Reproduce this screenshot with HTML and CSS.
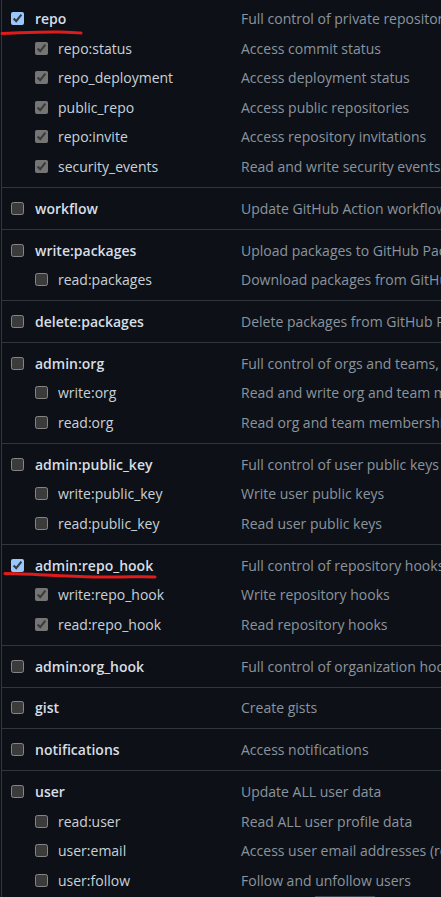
FILE: index.html
```html
<!DOCTYPE html>
<html lang="en">
<head>
<meta charset="utf-8">
<title>Scopes</title>
<link rel="stylesheet" href="styles.css">
</head>
<body>
<div class="scopes">
  <div class="group">
    <div class="row parent"><label class="name"><input type="checkbox" checked><span>repo</span></label><span class="desc">Full control of private repositories</span></div>
    <div class="row child"><label class="name"><input type="checkbox" checked disabled><span>repo:status</span></label><span class="desc">Access commit status</span></div>
    <div class="row child"><label class="name"><input type="checkbox" checked disabled><span>repo_deployment</span></label><span class="desc">Access deployment status</span></div>
    <div class="row child"><label class="name"><input type="checkbox" checked disabled><span>public_repo</span></label><span class="desc">Access public repositories</span></div>
    <div class="row child"><label class="name"><input type="checkbox" checked disabled><span>repo:invite</span></label><span class="desc">Access repository invitations</span></div>
    <div class="row child"><label class="name"><input type="checkbox" checked disabled><span>security_events</span></label><span class="desc">Read and write security events</span></div>
  </div>
  <div class="group">
    <div class="row parent"><label class="name"><input type="checkbox"><span>workflow</span></label><span class="desc">Update GitHub Action workflows</span></div>
  </div>
  <div class="group">
    <div class="row parent"><label class="name"><input type="checkbox"><span>write:packages</span></label><span class="desc">Upload packages to GitHub Package Registry</span></div>
    <div class="row child"><label class="name"><input type="checkbox"><span>read:packages</span></label><span class="desc">Download packages from GitHub Package Registry</span></div>
  </div>
  <div class="group">
    <div class="row parent"><label class="name"><input type="checkbox"><span>delete:packages</span></label><span class="desc">Delete packages from GitHub Package Registry</span></div>
  </div>
  <div class="group">
    <div class="row parent"><label class="name"><input type="checkbox"><span>admin:org</span></label><span class="desc">Full control of orgs and teams, read and write org projects</span></div>
    <div class="row child"><label class="name"><input type="checkbox"><span>write:org</span></label><span class="desc">Read and write org and team membership, read and write org projects</span></div>
    <div class="row child"><label class="name"><input type="checkbox"><span>read:org</span></label><span class="desc">Read org and team membership, read org projects</span></div>
  </div>
  <div class="group">
    <div class="row parent"><label class="name"><input type="checkbox"><span>admin:public_key</span></label><span class="desc">Full control of user public keys</span></div>
    <div class="row child"><label class="name"><input type="checkbox"><span>write:public_key</span></label><span class="desc">Write user public keys</span></div>
    <div class="row child"><label class="name"><input type="checkbox"><span>read:public_key</span></label><span class="desc">Read user public keys</span></div>
  </div>
  <div class="group">
    <div class="row parent"><label class="name"><input type="checkbox" checked><span>admin:repo_hook</span></label><span class="desc">Full control of repository hooks</span></div>
    <div class="row child"><label class="name"><input type="checkbox" checked disabled><span>write:repo_hook</span></label><span class="desc">Write repository hooks</span></div>
    <div class="row child"><label class="name"><input type="checkbox" checked disabled><span>read:repo_hook</span></label><span class="desc">Read repository hooks</span></div>
  </div>
  <div class="group">
    <div class="row parent"><label class="name"><input type="checkbox"><span>admin:org_hook</span></label><span class="desc">Full control of organization hooks</span></div>
  </div>
  <div class="group">
    <div class="row parent"><label class="name"><input type="checkbox"><span>gist</span></label><span class="desc">Create gists</span></div>
  </div>
  <div class="group">
    <div class="row parent"><label class="name"><input type="checkbox"><span>notifications</span></label><span class="desc">Access notifications</span></div>
  </div>
  <div class="group">
    <div class="row parent"><label class="name"><input type="checkbox"><span>user</span></label><span class="desc">Update ALL user data</span></div>
    <div class="row child"><label class="name"><input type="checkbox"><span>read:user</span></label><span class="desc">Read ALL user profile data</span></div>
    <div class="row child"><label class="name"><input type="checkbox"><span>user:email</span></label><span class="desc">Access user email addresses (read-only)</span></div>
    <div class="row child"><label class="name"><input type="checkbox"><span>user:follow</span></label><span class="desc">Follow and unfollow users</span></div>
  </div>
</div>
<svg class="marks" width="441" height="897" viewBox="0 0 441 897" aria-hidden="true">
  <path d="M2,33.5 C20,33 40,31.5 60,32 S78,33 81,33" />
  <path d="M5,573.5 C30,573.5 60,576.5 95,577 S140,576 155,577" />
</svg>
<div class="scrollbit"></div>
</body>
</html>
```

FILE: styles.css
```css
html, body {
  margin: 0;
  padding: 0;
  background: #0d1117;
  color-scheme: dark;
  overflow: hidden;
  height: 897px;
}

body {
  position: relative;
  font-family: "Open Sans", "Noto Sans", sans-serif;
  font-size: 14px;
  color: #c9d1d9;
}

.scopes {
  margin-top: -1.5px;
  margin-left: 1px;
  border-left: 1px solid #30363d;
}

.group {
  padding: 5.7px 0;
  border-bottom: 1px solid #30363d;
}

.row {
  display: flex;
  align-items: center;
  height: 29.5px;
  white-space: nowrap;
}

.name {
  display: flex;
  align-items: center;
  width: 239px;
  flex: none;
  box-sizing: border-box;
}

.name input {
  margin: 0;
  width: 13px;
  height: 13px;
  flex: none;
}

.parent .name {
  padding-left: 9px;
  font-weight: 600;
  color: #d7dee6;
}

.parent .name span {
  margin-left: 11px;
}

.child .name {
  padding-left: 33px;
}

.child .name span {
  margin-left: 10px;
}

.desc {
  color: #8b949e;
}

.marks {
  position: absolute;
  left: 0;
  top: 0;
  pointer-events: none;
}

.marks path {
  fill: none;
  stroke: #e01b1b;
  stroke-width: 3;
  stroke-linecap: round;
}

.scrollbit {
  position: absolute;
  left: 315px;
  bottom: 0;
  width: 60px;
  height: 1px;
  background: #3d444d;
}
```
